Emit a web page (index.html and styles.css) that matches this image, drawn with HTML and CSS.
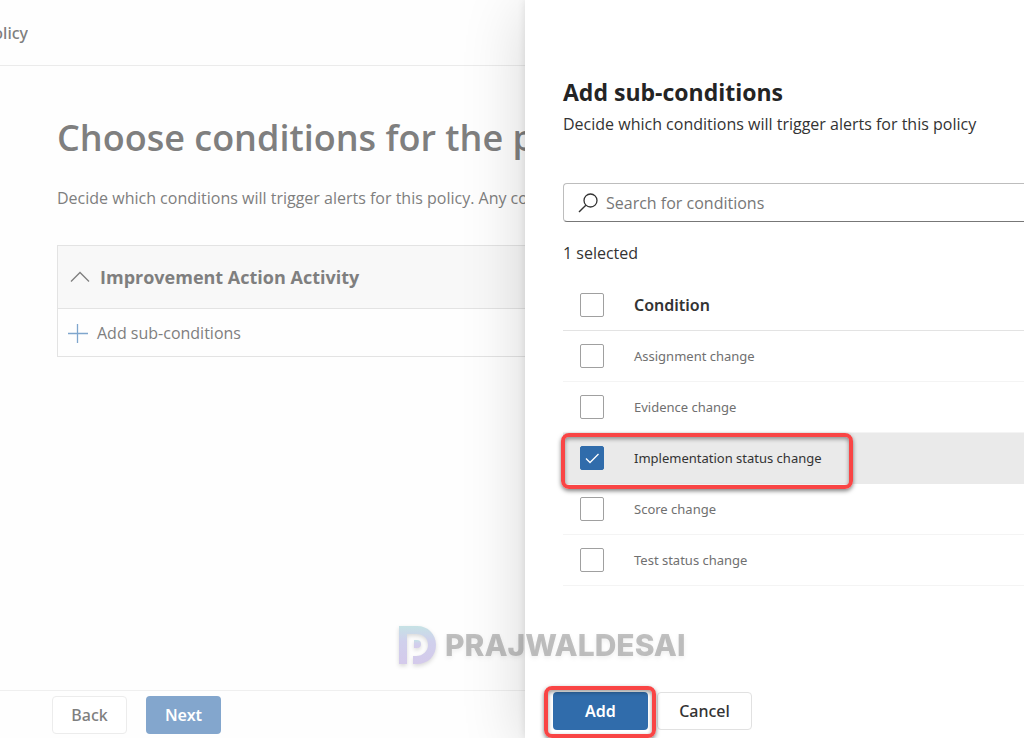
FILE: index.html
```html
<!DOCTYPE html>
<html lang="en">
<head>
    <meta charset="UTF-8">
    <meta name="viewport" content="width=device-width, initial-scale=1.0">
    <title>Alert policy - Add sub-conditions</title>
    <link rel="stylesheet" href="styles.css">
</head>
<body>
    <main class="wizard">
        <header class="wizard-header">
            <span class="wizard-name">policy</span>
        </header>
        <section class="wizard-content">
            <h1>Choose conditions for the policy</h1>
            <p>Decide which conditions will trigger alerts for this policy. Any condition</p>
            <div class="activity">
                <button class="activity-title">
                    <svg width="20" height="20" viewBox="0 0 20 20"><path d="M1 14.500L10 5.500L19 14.500" fill="none" stroke="#7f7f7f" stroke-width="1.300"/></svg>
                    Improvement Action Activity
                </button>
                <button class="activity-add">
                    <svg width="20" height="20" viewBox="0 0 20 20"><path d="M0 10.500H20M9.500 1V20" fill="none" stroke="#7fa6cd" stroke-width="1.300"/></svg>
                    Add sub-conditions
                </button>
            </div>
        </section>
        <footer class="wizard-footer">
            <button class="btn btn-faded">Back</button>
            <button class="btn btn-faded-primary">Next</button>
        </footer>
    </main>

    <aside class="panel">
        <div class="panel-content">
            <h2>Add sub-conditions</h2>
            <p>Decide which conditions will trigger alerts for this policy</p>
            <label class="search">
                <svg width="20" height="20" viewBox="0 0 20 20"><path d="M1 19L7.800 12.200" fill="none" stroke="#333" stroke-width="1.400"/><circle cx="12.500" cy="7.500" r="6.500" fill="none" stroke="#333" stroke-width="1.300"/></svg>
                <input type="text" placeholder="Search for conditions" aria-label="Search for conditions">
            </label>
            <div class="selected-count">1 selected</div>
            <table class="conditions">
                <thead>
                    <tr>
                        <th class="check"><input type="checkbox" aria-label="Select all"></th>
                        <th>Condition</th>
                    </tr>
                </thead>
                <tbody>
                    <tr>
                        <td class="check"><input type="checkbox" id="assignment"></td>
                        <td><label for="assignment">Assignment change</label></td>
                    </tr>
                    <tr>
                        <td class="check"><input type="checkbox" id="evidence"></td>
                        <td><label for="evidence">Evidence change</label></td>
                    </tr>
                    <tr class="selected">
                        <td class="check"><input type="checkbox" id="implementation" checked><span class="mark mark-row"></span></td>
                        <td><label for="implementation">Implementation status change</label></td>
                    </tr>
                    <tr>
                        <td class="check"><input type="checkbox" id="score"></td>
                        <td><label for="score">Score change</label></td>
                    </tr>
                    <tr>
                        <td class="check"><input type="checkbox" id="test"></td>
                        <td><label for="test">Test status change</label></td>
                    </tr>
                </tbody>
            </table>
        </div>
        <footer class="panel-footer">
            <span class="marked">
                <button class="btn btn-primary">Add</button>
                <span class="mark mark-button"></span>
            </span>
            <button class="btn btn-wide">Cancel</button>
        </footer>
    </aside>

    <div class="watermark">
        <svg width="38" height="40" viewBox="0 0 38 40">
            <defs>
                <linearGradient id="logo" x1="0" y1="0" x2="0" y2="1">
                    <stop offset="0" stop-color="#c6e2e5"/>
                    <stop offset="0.400" stop-color="#d0d0ec"/>
                    <stop offset="1" stop-color="#d4caeb"/>
                </linearGradient>
            </defs>
            <path fill="url(#logo)" d="M1 1H19C30 1 38 9 38 20C38 31 30 39 19 39H15V31H18C25 31 30 26 30 20C30 13 25 9 18 9H9V39H1Z"/>
            <path fill="url(#logo)" d="M16 15H19A4 4 0 0 1 19 23H16Z"/>
        </svg>
        <span>PRAJWALDESAI</span>
    </div>
</body>
</html>
```
FILE: styles.css
```css
* {
    box-sizing: border-box;
}
body {
    display: grid;
    grid-template-columns: minmax(0, 525fr) minmax(0, 499fr);
    position: relative;
    min-height: 100vh;
    margin: 0;
    overflow-x: hidden;
    font-family: "Open Sans", sans-serif;
    font-size: 16px;
    line-height: 24px;
    color: #333;
    background-color: #fff;
}
h1, h2, p {
    margin: 0;
}
button, input {
    font: inherit;
}
svg {
    flex: none;
}

/* wizard behind the panel */
.wizard {
    display: flex;
    flex-direction: column;
    overflow: hidden;
    white-space: nowrap;
    color: #7f7f7f;
    background-color: #fefefe;
}
.wizard-header {
    display: flex;
    align-items: center;
    height: 66px;
    border-bottom: 1px solid #ebebeb;
}
.wizard-name {
    display: flex;
    justify-content: flex-end;
    width: 28px;
    overflow: hidden;
    font-family: "Noto Sans", sans-serif;
    font-weight: 500;
}
.wizard-content {
    flex: 1;
    padding: 48px 0 0 57px;
}
.wizard-content h1 {
    font-size: 36px;
    line-height: 48px;
    font-weight: 600;
}
.wizard-content p {
    margin-top: 24px;
}
.activity {
    margin-top: 35px;
    border: 1px solid #e3e3e3;
    border-right: none;
}
.activity button {
    display: flex;
    align-items: center;
    width: 100%;
    border: none;
    color: #7f7f7f;
    background: none;
}
.activity .activity-title {
    gap: 10px;
    height: 63px;
    padding: 0 12px;
    border-bottom: 1px solid #e3e3e3;
    font-size: 18px;
    font-weight: 700;
    background-color: #f8f8f8;
}
.activity .activity-add {
    gap: 9px;
    height: 47px;
    padding: 0 10px;
}
.wizard-footer {
    display: flex;
    gap: 19px;
    padding: 5px 52px 4px;
    border-top: 1px solid #efefef;
}

/* buttons */
.btn {
    width: 75px;
    height: 38px;
    padding: 0;
    border: 1px solid #e1e1e1;
    border-radius: 4px;
    font-family: "Noto Sans", sans-serif;
    font-weight: 500;
    color: #333;
    background-color: #fff;
}
.btn-faded {
    border-color: #ececec;
    color: #7f7f7f;
}
.btn-faded-primary {
    border: none;
    font-weight: 600;
    color: #fff;
    background-color: #83a6cd;
}
.btn-primary {
    width: 95px;
    border: none;
    font-weight: 600;
    color: #fff;
    background-color: #306cab;
}
.btn-wide {
    width: 95px;
}

/* side panel */
.panel {
    display: flex;
    flex-direction: column;
    z-index: 1;
    background-color: #fff;
    box-shadow: 0 0 8px rgba(0, 0, 0, 0.1), 0 10px 60px rgba(0, 0, 0, 0.16);
}
.panel-content {
    flex: 1;
    padding: 76px 0 0 38px;
}
.panel-content h2 {
    font-size: 23px;
    line-height: 32px;
    color: #242424;
}
.panel-content p {
    margin-top: 4px;
}
.search {
    display: flex;
    align-items: center;
    gap: 8px;
    height: 39px;
    margin-top: 47px;
    padding-left: 14px;
    border: 1px solid #bdbdbd;
    border-right: none;
    border-bottom-color: #777;
    border-radius: 4px 0 0 4px;
}
.search input {
    flex: 1;
    min-width: 0;
    padding: 0;
    border: none;
    outline: none;
    background: none;
}
.search input::placeholder {
    color: #777;
}
.selected-count {
    margin-top: 19px;
}
.conditions {
    width: 100%;
    margin-top: 15px;
    border-collapse: separate;
    border-spacing: 0;
}
.conditions th,
.conditions td {
    height: 51px;
    padding: 0;
    border-bottom: 1px solid #f4f4f4;
    text-align: left;
    font-family: "Noto Sans", sans-serif;
    font-size: 13px;
    line-height: 24px;
    color: #707070;
}
.conditions th {
    border-color: #e3e3e3;
    font-size: 16px;
    font-weight: 600;
    color: #333;
}
.conditions .check {
    position: relative;
    width: 71px;
    padding-left: 17px;
}
.conditions .selected td {
    border-color: #eaeaea;
    color: #333;
    background-color: #eaeaea;
}
.conditions input {
    appearance: none;
    display: block;
    width: 24px;
    height: 24px;
    margin: 0;
    border: 1px solid #a0a0a0;
    border-radius: 2px;
    background-color: #fff;
}
.conditions input:checked {
    border-color: #306cab;
    background: #306cab url("data:image/svg+xml,%3Csvg xmlns='http://www.w3.org/2000/svg' viewBox='0 0 22 22'%3E%3Cpath d='M5 11.500L9 15.500L17.500 7' fill='none' stroke='white' stroke-width='1.300'/%3E%3C/svg%3E") center / 22px no-repeat;
}
.panel-footer {
    display: flex;
    gap: 9px;
    padding: 0 28px 8px;
}
.marked {
    position: relative;
    display: flex;
}

/* red highlights */
.mark {
    position: absolute;
    z-index: 2;
    border: 4px solid #f94545;
    border-radius: 8px;
    box-shadow: 0 2px 4px rgba(0, 0, 0, 0.5), inset 0 2px 4px rgba(0, 0, 0, 0.4);
    pointer-events: none;
}
.mark-row {
    top: 0;
    left: -2px;
    width: 292px;
    height: 56px;
}
.mark-button {
    inset: -6px -8px -8px -9px;
}

.watermark {
    position: absolute;
    left: 398px;
    bottom: 73px;
    z-index: 3;
    display: flex;
    align-items: center;
    gap: 9px;
    font-family: Inter, sans-serif;
    font-size: 30px;
    font-weight: 800;
    color: rgba(110, 110, 110, 0.42);
    filter: drop-shadow(0 2px 2px rgba(0, 0, 0, 0.15));
    pointer-events: none;
}
```
